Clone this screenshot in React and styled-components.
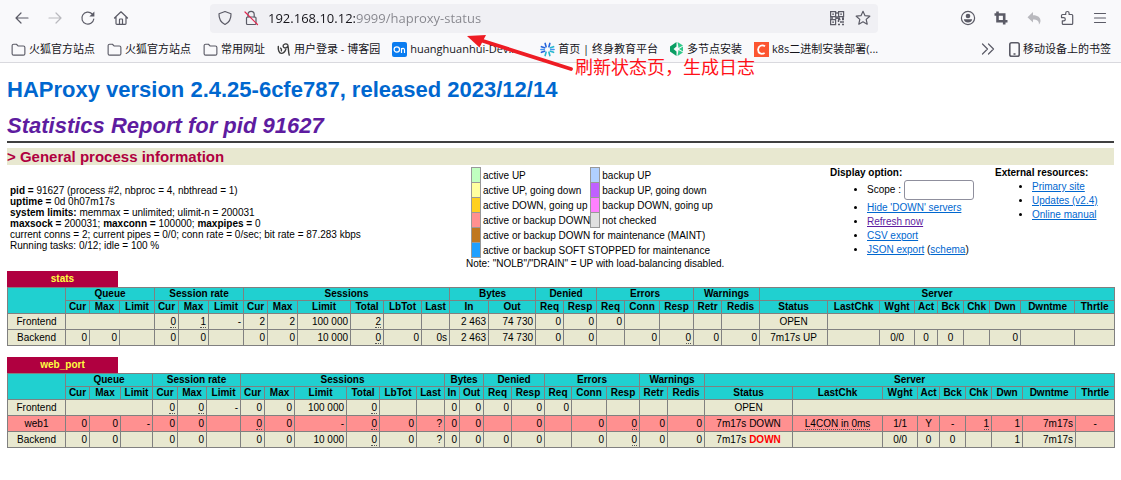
import styled, { createGlobalStyle } from 'styled-components';

const GlobalStyle = createGlobalStyle`
  * {
    box-sizing: border-box;
  }

  body {
    margin: 0;
    background: #fff;
    color: #000;
    font-family: 'Liberation Sans', Arial, sans-serif;
    font-size: 10px;
    line-height: 11px;
  }
`;

const Browser = styled.header`
  position: relative;
  background: #f9f9fb;
  border-bottom: 1px solid #d9d9de;
  color: #15141a;
  font-family: 'Open Sans', 'Noto Sans CJK SC', sans-serif;
`;

const NavBar = styled.div`
  display: flex;
  align-items: center;
  height: 36px;
  padding: 0 5px;
`;

const IconButton = styled.button`
  display: flex;
  align-items: center;
  justify-content: center;
  width: ${({ $width = 33 }) => $width}px;
  height: 28px;
  padding: 0;
  border: 0;
  background: none;
  color: ${({ $faded }) => ($faded ? '#b9b9be' : '#5b5b66')};
`;

const UrlBar = styled.div`
  flex: 1;
  display: flex;
  align-items: center;
  height: 29px;
  margin: 0 73px;
  padding: 0 2px;
  border-radius: 4px;
  background: #f0f0f4;
`;

const UrlInput = styled.input`
  flex: 1;
  min-width: 0;
  height: 24px;
  padding: 0 0 0 4px;
  border: 0;
  outline: 0;
  font: 13px/24px 'Open Sans', sans-serif;
  color: #15141a;
  background: linear-gradient(90deg, #15141a 91px, #85858c 91px);
  background-clip: text;
  -webkit-text-fill-color: transparent;
`;

const Bookmarks = styled.nav`
  display: flex;
  align-items: center;
  gap: 12px;
  height: 26px;
  padding: 0 10px 0 11px;
`;

const Bookmark = styled.a`
  display: flex;
  align-items: center;
  gap: 3px;
  min-width: ${({ $minWidth = 0 }) => $minWidth}px;
  color: #15141a;
  font-size: 11px;
  line-height: 16px;
  text-decoration: none;
  white-space: nowrap;
`;

const Spacer = styled.span`
  flex: 1;
`;

const Arrow = styled.svg`
  position: absolute;
  top: 32px;
  left: 464px;
  pointer-events: none;
`;

const Note = styled.span`
  position: absolute;
  top: 55px;
  left: 575px;
  color: #ff1018;
  font: 18px/22px 'Noto Sans CJK SC', sans-serif;
  white-space: nowrap;
`;

const Page = styled.main`
  padding: 13px 7px;
`;

const Version = styled.h1`
  margin: 0;
  font-size: 22px;
  line-height: 28px;

  a {
    color: #0067cf;
    text-decoration: none;
  }
`;

const Report = styled.h2`
  margin: 8px 0 0;
  font-size: 22px;
  line-height: 28px;
  font-style: italic;

  a {
    color: #5e1ca0;
    text-decoration: none;
  }
`;

const Rule = styled.hr`
  height: 2px;
  margin: 1px 0 5px;
  border: 0;
  background: #404040;
`;

const SectionTitle = styled.h3`
  margin: 0;
  background: #e8e8d0;
  color: #b00040;
  font-size: 15px;
  line-height: 17px;
`;

const Summary = styled.section`
  display: grid;
  grid-template-columns: 459fr 364fr 165fr 119fr;
  align-items: start;
  height: 106px;
  white-space: nowrap;
`;

const ProcessInfo = styled.p`
  margin: 0;
  padding: 20px 0 0 3px;
`;

const Legend = styled.div`
  padding-top: 2px;
`;

const LegendTable = styled.table`
  margin-left: 5px;
  border-collapse: collapse;

  td {
    height: 15px;
    padding: 2px 0 0 2px;
    line-height: 12px;
  }
`;

const Swatch = styled.td`
  && {
    width: 9px;
    padding: 0;
    border: 1px solid #999;
    background: ${({ $color }) => $color};
  }
`;

const LinkBlock = styled.div`
  padding-top: 1px;
  line-height: 14px;

  ul {
    margin: 0;
    padding-left: 37px;
  }

  a {
    color: #0067cf;
  }

  a.visited {
    color: #5e1ca0;
  }
`;

const ScopeItem = styled.li`
  margin-bottom: 1px;

  input {
    width: 70px;
    height: 20px;
    border: 1px solid #8f8f9d;
    border-radius: 3px;
    vertical-align: middle;
  }
`;

const Proxy = styled.section`
  margin-bottom: 11px;
`;

const ProxyName = styled.h4`
  width: 111px;
  margin: 0;
  background: #b00040;
  text-align: center;
  font-size: 10px;
  line-height: 16px;

  a {
    color: #ffff40;
    text-decoration: none;
  }
`;

const StatsTable = styled.table`
  width: 100%;
  table-layout: fixed;
  border-collapse: collapse;
  white-space: nowrap;
`;

const HeadRow = styled.tr`
  height: 13px;
  background: #20d0d0;
`;

const Th = styled.th`
  padding: 0;
  border: 1px solid #808080;
  line-height: 12px;
`;

const Row = styled.tr`
  height: 16px;
  background: ${({ $down }) => ($down ? '#ff9090' : '#e8e8d0')};
`;

const Td = styled.td`
  padding: 0 2px;
  border: 1px solid #808080;
  line-height: 12px;
  text-align: ${({ $align }) => $align};
`;

const Dotted = styled.u`
  text-decoration: none;
  border-bottom: 1px dotted #555;
`;

const Down = styled.b`
  color: #f00;
`;

const Icon = ({ size = 16, children, ...rest }) => (
  <svg
    width={size}
    height={size}
    viewBox="0 0 16 16"
    fill="none"
    stroke="currentColor"
    strokeWidth="1.2"
    strokeLinecap="round"
    strokeLinejoin="round"
    aria-hidden="true"
    {...rest}
  >
    {children}
  </svg>
);

const BackIcon = () => (
  <Icon>
    <path d="M14 8H2M7 3L2 8l5 5" />
  </Icon>
);

const ForwardIcon = () => (
  <Icon>
    <path d="M2 8h12M9 3l5 5-5 5" />
  </Icon>
);

const ReloadIcon = () => (
  <Icon>
    <path d="M13.8 9A6 6 0 1 1 12 3.8" />
    <path d="M14.4 1.5v5H9.4z" fill="currentColor" stroke="none" />
  </Icon>
);

const HomeIcon = () => (
  <Icon>
    <path d="M1.5 8L8 1.8 14.5 8M3 7v6.500a.8.8 0 0 0 .8.8h8.400a.8.8 0 0 0 .8-.8V7" />
    <path d="M6.500 14V9.500a.5.5 0 0 1 .5-.5h2a.5.5 0 0 1 .5.5V14" />
  </Icon>
);

const ShieldIcon = () => (
  <Icon>
    <path d="M8 1.500l6 2.200c.2 5-1.800 8.600-6 10.800C3.800 12.300 1.800 8.700 2 3.700z" />
  </Icon>
);

const LockIcon = () => (
  <Icon>
    <rect x="3.500" y="7" width="9.500" height="7.500" rx="1" />
    <path d="M5 7V4.500a3 3 0 0 1 6.200 0V7" />
    <path d="M2 2l12.500 12.500" stroke="#e22850" />
  </Icon>
);

const QrIcon = () => (
  <Icon strokeLinecap="butt" strokeLinejoin="miter">
    <path d="M1.600 1.600h5v5h-5zM9.600 1.600h5v5h-5zM1.600 9.600h5v5h-5z" />
    <path d="M3.200 4.100h1.800M11.200 4.100h1.800M3.200 12.100h1.800M9 9.500h2.500M13 9.500h2M11 12h2M9 14.500h2M13 14.500h2M9.500 10v2M14 11v2M8 2v2M8 6v3M1 8h3M6 8h5M13 8h2" strokeWidth="1.400" />
  </Icon>
);

const StarIcon = () => (
  <Icon>
    <path d="M8 1.300l2 4.400 4.800.5-3.600 3.200 1 4.800L8 11.800l-4.200 2.400 1-4.800L1.200 6.200 6 5.700z" />
  </Icon>
);

const AccountIcon = () => (
  <Icon>
    <circle cx="8" cy="8" r="6.600" />
    <circle cx="8" cy="6" r="2.300" fill="currentColor" stroke="none" />
    <path d="M3.800 9.300h8.400c-.4 2.100-2 3.300-4.200 3.300S4.200 11.400 3.800 9.300z" fill="currentColor" stroke="none" />
  </Icon>
);

const CropIcon = () => (
  <Icon strokeLinecap="butt" strokeLinejoin="miter" strokeWidth="2.600">
    <path d="M4.500 1.500v9.700h10M1.500 4.500h9.700v10" />
  </Icon>
);

const UndoIcon = () => (
  <Icon>
    <path d="M7 2v3.200c5 0 7.500 2.300 7.500 5.600 0 1.500-.6 2.700-1.600 3.700.3-3.300-1.500-5-5.900-5V12.500L1.500 7.200z" fill="currentColor" stroke="none" />
  </Icon>
);

const PuzzleIcon = () => (
  <Icon>
    <path d="M6.700 4.500V3.200a1.700 1.700 0 0 1 3.400 0v1.300h2.600a1 1 0 0 1 1 1v7.900a1 1 0 0 1-1 1H4.300a1 1 0 0 1-1-1v-2.600h1.400a1.600 1.600 0 0 0 0-3.200H2.500V5.500a1 1 0 0 1 1-1z" />
  </Icon>
);

const MenuIcon = () => (
  <Icon>
    <path d="M2.500 3.500h11M2.500 8h11M2.500 12.500h11" />
  </Icon>
);

const FolderIcon = () => (
  <Icon size={15} color="#5b5b66">
    <path d="M1.200 4a1.600 1.600 0 0 1 1.600-1.600h3l1.700 1.800h5.700a1.600 1.600 0 0 1 1.600 1.600v6.600a1.600 1.600 0 0 1-1.600 1.600H2.800a1.600 1.600 0 0 1-1.600-1.600z" />
  </Icon>
);

const BlogIcon = () => (
  <Icon size={14} color="#3c3c3c" strokeWidth="1.600">
    <path d="M1.500 5c-.5 4 1 8 3.500 8s4-2 5-4.500" />
    <path d="M12.500 3.500c-2-2.500-6-1-5.500 1.500s4.500 2.500 5.500-.5c.8 3.500.3 6.500 1.500 10.500" />
    <path d="M5 10c.5-1.500 0-2.500-1-3" />
  </Icon>
);

const OnIcon = () => (
  <svg width="15" height="15" viewBox="0 0 15 15" aria-hidden="true">
    <rect width="15" height="15" rx="2" fill="#0a7cf0" />
    <circle cx="4.800" cy="7.500" r="2.700" fill="none" stroke="#fff" strokeWidth="1.200" />
    <path d="M9.500 11V6M9.500 7.500c.8-1.600 3-1.500 3 .5v3" fill="none" stroke="#fff" strokeWidth="1.200" />
  </svg>
);

const BurstIcon = () => (
  <Icon strokeWidth="1.700" size={15}>
    <path d="M5.500 1.500l1 3.500M10.500 1.500l-1 3.500M1.500 5l3.500 1.200M1.500 11l3.500-1.200" stroke="#2464dc" />
    <path d="M14.500 5L11 6.200M14.500 11L11 9.800M5.500 14.500l1-3.500M10.500 14.500l-1-3.500" stroke="#25b7ce" />
    <path d="M1 8h3.500M11.500 8H15" stroke="#4593ee" />
  </Icon>
);

const NodeIcon = () => (
  <svg width="14" height="14" viewBox="0 0 14 14" aria-hidden="true">
    <path d="M6.500 0v4.500L3.500 7l3 2.500V14L0 9.500v-5z" fill="#0a9d63" />
    <path d="M7.500 0L13 3.500 8.500 6zM9 7l4-2.500v5zM7.500 14L13 10.500 8.500 8z" fill="#31c98a" />
  </svg>
);

const CsdnIcon = () => (
  <svg width="15" height="15" viewBox="0 0 15 15" aria-hidden="true">
    <rect width="15" height="15" fill="#fc5531" />
    <path d="M11 4.300C8 2.300 4.300 3.800 4.100 7.500c-.1 4 3.400 5.200 6.500 3.500" fill="none" stroke="#fff" strokeWidth="1.800" />
  </svg>
);

const ChevronsIcon = () => (
  <Icon>
    <path d="M2.500 3l5 5-5 5M8.500 3l5 5-5 5" />
  </Icon>
);

const PhoneIcon = () => (
  <svg width="11" height="15" viewBox="0 0 11 15" fill="none" stroke="#5b5b66" strokeWidth="1.600" aria-hidden="true">
    <rect x=".8" y=".8" width="9.400" height="13.400" rx="1.800" />
    <path d="M4.500 12h2" />
  </svg>
);

const bookmarks = [
  [FolderIcon, '火狐官方站点'],
  [FolderIcon, '火狐官方站点'],
  [FolderIcon, '常用网址'],
  [BlogIcon, '用户登录 - 博客园'],
  [OnIcon, 'huanghuanhui-Dev...', 136],
  [BurstIcon, '首页 | 终身教育平台'],
  [NodeIcon, '多节点安装'],
  [CsdnIcon, 'k8s二进制安装部署(...'],
];

const groups = [
  ['Queue', 3],
  ['Session rate', 3],
  ['Sessions', 6],
  ['Bytes', 2],
  ['Denied', 2],
  ['Errors', 3],
  ['Warnings', 2],
  ['Server', 9],
];

const columns = [
  'Cur', 'Max', 'Limit',
  'Cur', 'Max', 'Limit',
  'Cur', 'Max', 'Limit', 'Total', 'LbTot', 'Last',
  'In', 'Out',
  'Req', 'Resp',
  'Req', 'Conn', 'Resp',
  'Retr', 'Redis',
  'Status', 'LastChk', 'Wght', 'Act', 'Bck', 'Chk', 'Dwn', 'Dwntme', 'Thrtle',
];

const centered = ['Status', 'LastChk', 'Wght', 'Act', 'Bck', 'Thrtle'];

const u = (text) => <Dotted>{text}</Dotted>;

const proxies = [
  {
    name: 'stats',
    widths: [58, 24, 30, 35, 24, 30, 35, 24, 30, 53, 33, 38, 28, 39, 47, 28, 33, 28, 35, 34, 28, 38, 68, 52, 35, 23, 26, 26, 31, 54, 40],
    rows: [
      {
        name: 'Frontend',
        frontend: true,
        cells: [u('0'), u('1'), '-', '2', '2', '100 000', u('2'), '', '', '2 463', '74 730', '0', '0', '0', '', '', '', '', 'OPEN'],
      },
      {
        name: 'Backend',
        cells: ['0', '0', '', '0', '0', '', '0', '0', '10 000', u('0'), '0', '0s', '2 463', '74 730', '0', '0', '', '0', u('0'), '0', '0', '7m17s UP', '', '0/0', '0', '0', '', '0', '', ''],
      },
    ],
  },
  {
    name: 'web_port',
    widths: [58, 24, 31, 32, 25, 29, 34, 24, 30, 52, 33, 37, 28, 15, 24, 28, 33, 27, 35, 33, 28, 37, 88, 90, 35, 22, 26, 26, 31, 53, 39],
    rows: [
      {
        name: 'Frontend',
        frontend: true,
        cells: [u('0'), u('0'), '-', '0', '0', '100 000', u('0'), '', '', '0', '0', '0', '0', '0', '', '', '', '', 'OPEN'],
      },
      {
        name: 'web1',
        down: true,
        cells: ['0', '0', '-', '0', '0', '', u('0'), '0', '-', u('0'), '0', '?', '0', '0', '', '0', '', '0', u('0'), '0', '0', '7m17s DOWN', u('L4CON in 0ms'), '1/1', 'Y', '-', u('1'), '1', '7m17s', '-'],
      },
      {
        name: 'Backend',
        cells: ['0', '0', '', '0', '0', '', '0', '0', '10 000', u('0'), '0', '?', '0', '0', '0', '0', '', '0', u('0'), '0', '0', <>7m17s <Down>DOWN</Down></>, '', '0/0', '0', '0', '', '1', '7m17s', ''],
      },
    ],
  },
];

const legend = [
  ['#c0ffc0', 'active UP', '#b0d0ff', 'backup UP'],
  ['#ffffa0', 'active UP, going down', '#c060ff', 'backup UP, going down'],
  ['#ffd020', 'active DOWN, going up', '#ff80ff', 'backup DOWN, going up'],
  ['#ff9090', 'active or backup DOWN', '#e0e0e0', 'not checked'],
  ['#c07820', 'active or backup DOWN for maintenance (MAINT)'],
  ['#20a0ff', 'active or backup SOFT STOPPED for maintenance'],
];

const ProxyRow = ({ row }) => {
  // the frontend has no queue, so its cells start after the first group
  const offset = row.frontend ? 3 : 0;

  return (
    <Row $down={row.down}>
      <Td $align="center">{row.name}</Td>
      {row.frontend && <Td colSpan={3} />}
      {row.cells.map((cell, i) => (
        <Td key={i} $align={centered.includes(columns[i + offset]) ? 'center' : 'right'}>
          {cell}
        </Td>
      ))}
      {row.frontend && <Td colSpan={8} />}
    </Row>
  );
};

const ProxyBlock = ({ proxy }) => (
  <Proxy>
    <ProxyName>
      <a href={`#${proxy.name}`}>{proxy.name}</a>
    </ProxyName>
    <StatsTable>
      <colgroup>
        {proxy.widths.map((width, i) => (
          <col key={i} width={width} />
        ))}
      </colgroup>
      <thead>
        <HeadRow>
          <Th rowSpan={2} />
          {groups.map(([label, span]) => (
            <Th key={label} colSpan={span}>{label}</Th>
          ))}
        </HeadRow>
        <HeadRow>
          {columns.map((label, i) => (
            <Th key={i}>{label}</Th>
          ))}
        </HeadRow>
      </thead>
      <tbody>
        {proxy.rows.map((row) => (
          <ProxyRow key={row.name} row={row} />
        ))}
      </tbody>
    </StatsTable>
  </Proxy>
);

const App = () => {
  return (
    <>
      <GlobalStyle />
      <Browser>
        <NavBar>
          <IconButton aria-label="Back"><BackIcon /></IconButton>
          <IconButton aria-label="Forward" $faded><ForwardIcon /></IconButton>
          <IconButton aria-label="Reload"><ReloadIcon /></IconButton>
          <IconButton aria-label="Home"><HomeIcon /></IconButton>
          <UrlBar>
            <IconButton aria-label="Tracking protection" $width={26}><ShieldIcon /></IconButton>
            <IconButton aria-label="Connection" $width={26}><LockIcon /></IconButton>
            <UrlInput aria-label="Address" defaultValue="192.168.10.12:9999/haproxy-status" />
            <IconButton aria-label="QR code" $width={26}><QrIcon /></IconButton>
            <IconButton aria-label="Bookmark page" $width={26}><StarIcon /></IconButton>
          </UrlBar>
          <IconButton aria-label="Account"><AccountIcon /></IconButton>
          <IconButton aria-label="Screenshot"><CropIcon /></IconButton>
          <IconButton aria-label="Undo" $faded><UndoIcon /></IconButton>
          <IconButton aria-label="Extensions"><PuzzleIcon /></IconButton>
          <IconButton aria-label="Menu"><MenuIcon /></IconButton>
        </NavBar>
        <Bookmarks>
          {bookmarks.map(([Glyph, label, minWidth], i) => (
            <Bookmark key={i} href="#" $minWidth={minWidth}><Glyph />{label}</Bookmark>
          ))}
          <Spacer />
          <IconButton aria-label="More bookmarks" $width={18}><ChevronsIcon /></IconButton>
          <Bookmark href="#"><PhoneIcon />移动设备上的书签</Bookmark>
        </Bookmarks>
        <Arrow width="112" height="42" viewBox="0 0 112 42">
          <path d="M16 8l91 29" stroke="#ee1c24" strokeWidth="3.800" strokeLinecap="round" />
          <path d="M3 4l19-1-6.500 12.500z" fill="#ee1c24" />
        </Arrow>
        <Note>刷新状态页，生成日志</Note>
      </Browser>

      <Page>
        <Version><a href="#haproxy">HAProxy version 2.4.25-6cfe787, released 2023/12/14</a></Version>
        <Report><a href="#report">Statistics Report for pid 91627</a></Report>
        <Rule />
        <SectionTitle>&gt; General process information</SectionTitle>

        <Summary>
          <ProcessInfo>
            <b>pid = </b>91627 (process #2, nbproc = 4, nbthread = 1)<br />
            <b>uptime = </b>0d 0h07m17s<br />
            <b>system limits:</b> memmax = unlimited; ulimit-n = 200031<br />
            <b>maxsock = </b>200031; <b>maxconn = </b>100000; <b>maxpipes = </b>0<br />
            current conns = 2; current pipes = 0/0; conn rate = 0/sec; bit rate = 87.283 kbps<br />
            Running tasks: 0/12; idle = 100 %
          </ProcessInfo>
          <Legend>
            <LegendTable>
              <tbody>
                {legend.map(([color, label, color2, label2]) => (
                  <tr key={label}>
                    <Swatch $color={color} />
                    <td colSpan={color2 ? 1 : 3}>{label}</td>
                    {color2 && <Swatch $color={color2} />}
                    {color2 && <td>{label2}</td>}
                  </tr>
                ))}
              </tbody>
            </LegendTable>
            Note: "NOLB"/"DRAIN" = UP with load-balancing disabled.
          </Legend>
          <LinkBlock>
            <b>Display option:</b>
            <ul>
              <ScopeItem>
                <label htmlFor="scope">Scope : </label>
                <input id="scope" type="text" />
              </ScopeItem>
              <li><a href="#hide">Hide 'DOWN' servers</a></li>
              <li><a className="visited" href="#refresh">Refresh now</a></li>
              <li><a href="#csv">CSV export</a></li>
              <li><a href="#json">JSON export</a> (<a href="#schema">schema</a>)</li>
            </ul>
          </LinkBlock>
          <LinkBlock>
            <b>External resources:</b>
            <ul>
              <li><a href="#site">Primary site</a></li>
              <li><a href="#updates">Updates (v2.4)</a></li>
              <li><a href="#manual">Online manual</a></li>
            </ul>
          </LinkBlock>
        </Summary>

        {proxies.map((proxy) => (
          <ProxyBlock key={proxy.name} proxy={proxy} />
        ))}
      </Page>
    </>
  );
};

export default App;
